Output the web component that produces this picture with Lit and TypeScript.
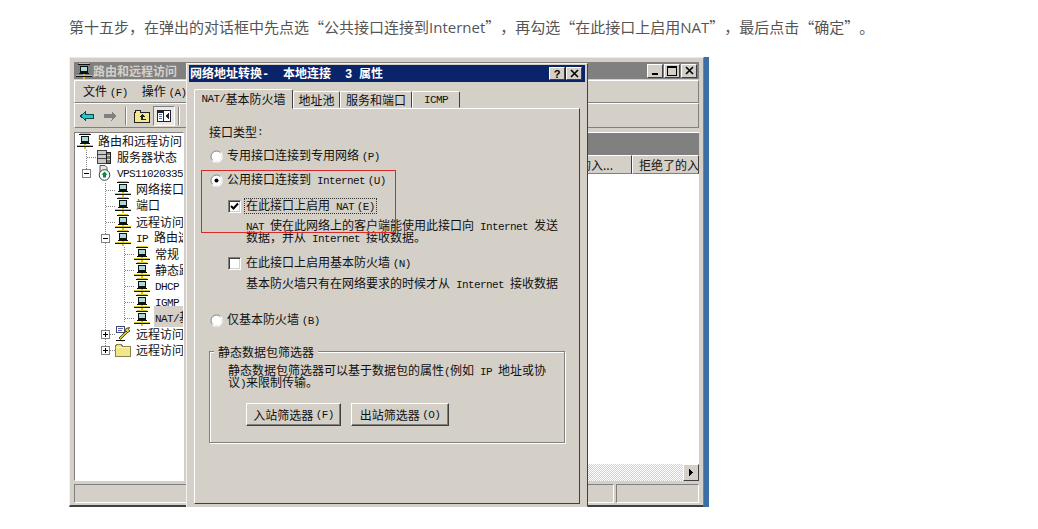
import { LitElement, html, css, svg } from "lit";
import { customElement } from "lit/decorators.js";

const netIcon = html`<svg class="ic" width="16" height="16" viewBox="0 0 16 16" shape-rendering="crispEdges">
  <rect x="3" y="0" width="10" height="1" fill="#d8c820"/>
  <rect x="2" y="1" width="12" height="1" fill="#111"/>
  <rect x="4" y="3" width="8" height="7" fill="#111"/>
  <rect x="5" y="4" width="6" height="4" fill="#a8dcdc"/>
  <rect x="3" y="10" width="10" height="1" fill="#111"/>
  <rect x="7" y="11" width="2" height="1" fill="#d8c820"/>
  <rect x="0" y="12" width="16" height="1" fill="#d8c820"/>
  <rect x="0" y="13" width="16" height="1" fill="#111"/>
  <rect x="7" y="14" width="2" height="2" fill="#d8c820"/>
</svg>`;

const serverIcon = html`<svg class="ic" width="16" height="16" viewBox="0 0 16 16" shape-rendering="crispEdges">
  <rect x="1.500" y="1.500" width="9" height="13" fill="#c8c8c8" stroke="#444"/>
  <rect x="2" y="5" width="8" height="1" fill="#444"/><rect x="2" y="9" width="8" height="1" fill="#444"/>
  <rect x="10.500" y="3.500" width="4" height="11" fill="#777" stroke="#222"/>
  <rect x="11" y="6" width="3" height="1" fill="#ddd"/><rect x="11" y="10" width="3" height="1" fill="#ddd"/>
</svg>`;

const vpsIcon = html`<svg class="ic" width="16" height="16" viewBox="0 0 16 16">
  <path d="M4 .5h5l2 2v5H4z" fill="#e4e4e4" stroke="#555"/>
  <circle cx="8.500" cy="10" r="5.300" fill="#fff" stroke="#444"/>
  <path d="M8.500 6.500l3 3.300H10v2.700H7V9.800H5.500z" fill="#0a8a3a"/>
</svg>`;

const toolsIcon = html`<svg class="ic" width="16" height="16" viewBox="0 0 16 16">
  <rect x="1.500" y=".5" width="8" height="6" fill="#fff" stroke="#446"/>
  <path d="M3 2.500h5M3 4.500h4" stroke="#5566bb"/>
  <path d="M4 12l7-7 1.500 1.500-7 7z" fill="#d8c820" stroke="#222" stroke-width=".8"/>
  <path d="M11 2.500l3.500-1-1 2 1.500 1.500-2.500 1.500-2-2z" fill="#e6da60" stroke="#222" stroke-width=".8"/>
  <path d="M1 14.500h9" stroke="#111"/><path d="M7 15v1" stroke="#d8c820"/>
</svg>`;

const folderIcon = html`<svg class="ic" width="16" height="16" viewBox="0 0 16 16" shape-rendering="crispEdges">
  <path d="M.5 14.500V3.500h1v-1h5v1h1v1h8v10z" fill="#f0e68c" stroke="#8a8050"/>
  <rect x="1" y="5" width="14" height="1" fill="#fff8c8"/>
</svg>`;

const exp = (plus: boolean) => html`<span class="exp">
  <svg width="9" height="9" viewBox="0 0 9 9" shape-rendering="crispEdges">
    <rect x=".5" y=".5" width="8" height="8" fill="#fff" stroke="#808080"/>
    <rect x="2" y="4" width="5" height="1" fill="#000"/>
    ${plus ? svg`<rect x="4" y="2" width="1" height="5" fill="#000"/>` : ""}
  </svg></span>`;

const closeX = html`<svg width="9" height="9" viewBox="0 0 9 9"><path d="M1 1l7 7M8 1L1 8" stroke="#000" stroke-width="1.600"/></svg>`;

interface Row { lv: number; icon: unknown; text: unknown; exp?: boolean }

@customElement("app-root")
export class AppRoot extends LitElement {
  static styles = css`
    :host { display: block; width: 1038px; height: 529px; background: #fff; overflow: hidden;
      font-family: "Noto Sans CJK SC", sans-serif; }
    .intro { margin: 0; padding: 17px 0 0 69px; height: 57px; box-sizing: border-box; font-size: 15px; line-height: 20px; color: #555; white-space: nowrap; text-spacing-trim: space-all; }
    .intro .en { font-family: "Open Sans", sans-serif; }
    .shot { position: relative; margin-left: 69px; width: 640px; height: 450px; background: #3a6ea5; font-size: 12px; line-height: 12px; color: #111; overflow: hidden; text-spacing-trim: space-all; }
    .m { font-family: "Liberation Mono", monospace; font-size: 11px; letter-spacing: -.6px; white-space: pre; }
    .tm { font-family: "Liberation Mono", monospace; font-size: 12px; letter-spacing: -.2px; white-space: pre; }

    .win { position: absolute; box-sizing: border-box; background: #d4d0c8; }
    .back { left: 0; top: 0; width: 635px; height: 450px; padding: 4px 4px 2px 4px; display: flex; flex-direction: column; border-top: 1px solid #ece9e2; border-left: 1px solid #f4f2ee; border-bottom: 2px solid #404040; border-right: 1px solid #808080; }
    .tbar { height: 17px; display: flex; align-items: center; padding: 0 2px; gap: 1px; flex: none; font-weight: 700; }
    .tbar.in { background: #808080; color: #d4d0c8; justify-content: space-between; }
    .tl { display: flex; align-items: center; gap: 1px; white-space: nowrap; }
    .btns { display: flex; gap: 1px; }
    .cb { width: 16px; height: 14px; box-sizing: border-box; background: #d4d0c8; border: 1px solid; border-color: #fff #404040 #404040 #fff; display: flex; align-items: center; justify-content: center; color: #000; font: 700 11px/12px "Liberation Sans", sans-serif; }
    .bar { height: 23px; flex: none; box-sizing: border-box; border: 1px solid; border-color: #fff #808080 #808080 #fff; display: flex; align-items: center; }
    .menu { padding-left: 8px; margin-top: 1px; gap: 14px; }
    .tools { height: 25px; padding-left: 5px; }
    .fwd { margin-left: 9px; }
    .sep { width: 1px; height: 18px; background: #808080; border-right: 1px solid #fff; margin: 0 7px 0 8px; }
    .sep.end { margin: 0 0 0 3px; }
    .sp { width: 3px; }
    .press { width: 22px; height: 20px; box-sizing: border-box; display: flex; align-items: center; justify-content: center; border: 1px solid; border-color: #808080 #fff #fff #808080; background: #ece9e2; }
    .main { flex: 1; display: flex; gap: 2px; margin-top: 4px; min-height: 0; }
    .tree { position: relative; width: 110px; flex: none; background: #fff; border: 1px solid; border-color: #808080 #fff #fff #808080; box-sizing: border-box; overflow: hidden; height: 349px; }
    .links { position: absolute; left: 0; top: 0; pointer-events: none; }
    .row { display: flex; align-items: center; height: 16.1px; white-space: nowrap; position: relative; }
    .row .ic { flex: none; margin-right: 5px; }
    .lv0 { padding-left: 2px; } .lv1 { padding-left: 21px; } .lv2 { padding-left: 40px; } .lv3 { padding-left: 59px; }
    .exp { position: absolute; top: 4px; width: 9px; height: 9px; line-height: 0; }
    .lv1 .exp { left: 7px; } .lv2 .exp { left: 26px; }
    .sel { background: #d4d0c8; padding: 2px 0 2px 1px; margin-left: -1px; }
    .right { flex: 1; display: flex; flex-direction: column; min-width: 0; }
    .band { height: 23px; background: #808080; flex: none; border-top: 1px solid #fff; box-sizing: border-box; }
    .head { height: 19px; flex: none; display: flex; justify-content: flex-end; background: #d4d0c8; }
    .hc { box-sizing: border-box; height: 19px; border: 1px solid; border-color: #fff #404040 #808080 #fff; display: flex; align-items: center; white-space: nowrap; overflow: hidden; }
    .hc.a { width: 55px; padding-left: 1px; }
    .hc.b { width: 67px; padding-left: 6px; }
    .list { flex: 1; background: #fff; }
    .sb { height: 17px; flex: none; display: flex; justify-content: flex-end;
      background-color: #fff; background-image: conic-gradient(#d4d0c8 25%, #fff 0 50%, #d4d0c8 0 75%, #fff 0); background-size: 2px 2px; }
    .sb .arr { width: 16px; height: 17px; box-sizing: border-box; background: #d4d0c8; border: 1px solid; border-color: #fff #404040 #404040 #fff; display: flex; align-items: center; justify-content: center; }
    .status { height: 19px; flex: none; display: flex; gap: 2px; margin-top: 3px; }
    .st { box-sizing: border-box; border: 1px solid; border-color: #808080 #fff #fff #808080; height: 19px; }
    .st.l { flex: 1; } .st.r { width: 83px; }

    .dlg { left: 117px; top: 6px; width: 402px; height: 444px; padding: 1px 2px 0 2px; display: flex; flex-direction: column; border: 1px solid; border-color: #f4f2ee #404040 #d4d0c8 #f4f2ee; }
    .dlg .tbar { background: #0a246a; color: #fff; height: 17px; justify-content: space-between; padding: 0 3px 0 1px; }
    .dlg .cb { height: 13px; }
    .tabs { display: flex; padding: 6px 0 0 5px; height: 26px; box-sizing: border-box; align-items: flex-end; flex: none; position: relative; z-index: 1; }
    .tab { height: 17px; box-sizing: border-box; border: 1px solid; border-color: #fff #404040 transparent #fff; border-radius: 2px 2px 0 0; display: flex; align-items: center; justify-content: center; white-space: nowrap; }
    .tab.on { height: 20px; width: 99px; margin-bottom: -1px; background: #d4d0c8; border-bottom: 1px solid #d4d0c8; }
    .t2 { width: 47px; } .t3 { width: 72px; } .t4 { width: 48px; }
    .panel { position: relative; box-sizing: border-box; width: 386px; height: 396px; margin-left: 5px; padding: 15px 0 0 14px; border: 1px solid; border-color: #fff #404040 #404040 #fff; }
    .ln { height: 16px; display: flex; align-items: center; white-space: nowrap; }
    .opt { margin-left: 1px; gap: 4px; }
    .g8 { margin-top: 8px; } .g10 { margin-top: 10px; } .g12 { margin-top: 12px; } .g23 { margin-top: 23px; }
    .sub { margin-left: 19px; gap: 5px; }
    .desc { margin: 6px 0 0 37px; white-space: nowrap; }
    .desc.up { margin-top: 5px; }
    .desc div { height: 12px; }
    .radio { flex: none; }
    .box { flex: none; width: 13px; height: 13px; box-sizing: border-box; background: #fff; border: 1px solid; border-color: #808080 #fff #fff #808080; box-shadow: inset 1px 1px 0 #404040, inset -1px -1px 0 #d4d0c8; display: flex; align-items: center; justify-content: center; }
    .group { position: relative; box-sizing: border-box; margin-top: 23px; width: 356px; height: 92px; border: 1px solid #808080; box-shadow: 1px 1px 0 #fff, inset 1px 1px 0 #fff; padding: 12px 0 0 18px; }
    .legend { position: absolute; left: 4px; top: -6px; background: #d4d0c8; padding: 0 4px; height: 12px; white-space: nowrap; }
    .gtext div { height: 12px; white-space: nowrap; }
    .gb { display: flex; gap: 10px; margin: 15px 0 0 18px; }
    .btn { box-sizing: border-box; height: 23px; border: 1px solid; border-color: #fff #404040 #404040 #fff; box-shadow: inset -1px -1px 0 #808080; display: flex; align-items: center; justify-content: center; white-space: pre; background: #d4d0c8; }
    .b1 { width: 95px; } .b2 { width: 98px; }
    .red { position: absolute; left: 132px; top: 113px; width: 195px; height: 63px; box-sizing: border-box; border: 1px solid #d62b2b; pointer-events: none; z-index: 3; }
    .focus { border: 1px dotted #333; padding: 0 1px; height: 14px; display: flex; align-items: center; margin-left: -2px; }
  `;

  private radio(on = false) {
    return html`<svg class="radio" width="13" height="13" viewBox="0 0 13 13">
      <circle cx="6.500" cy="6.500" r="5.500" fill="#fff" stroke="#808080" stroke-width="1"/>
      <path d="M2.500 10.500a5.600 5.600 0 0 0 8-8" fill="none" stroke="#fff" stroke-width="1.400"/>
      ${on ? svg`<circle cx="6.500" cy="6.500" r="2" fill="#000"/>` : ""}
    </svg>`;
  }

  private check(on = false) {
    return html`<span class="box">${on
      ? html`<svg width="9" height="9" viewBox="0 0 9 9"><path d="M1 4l2.500 2.500L8 1.500" fill="none" stroke="#000" stroke-width="2"/></svg>`
      : ""}</span>`;
  }

  render() {
    const m = (s: string) => html`<span class="m">${s}</span>`;
    const tm = (s: string) => html`<span class="tm">${s}</span>`;
    const rows: Row[] = [
      { lv: 0, icon: netIcon, text: "路由和远程访问" },
      { lv: 1, icon: serverIcon, text: "服务器状态" },
      { lv: 1, icon: vpsIcon, text: m("VPS110203353"), exp: false },
      { lv: 2, icon: netIcon, text: "网络接口" },
      { lv: 2, icon: netIcon, text: "端口" },
      { lv: 2, icon: netIcon, text: "远程访问" },
      { lv: 2, icon: netIcon, text: html`${m("IP ")}路由选`, exp: false },
      { lv: 3, icon: netIcon, text: "常规" },
      { lv: 3, icon: netIcon, text: "静态路" },
      { lv: 3, icon: netIcon, text: m("DHCP") },
      { lv: 3, icon: netIcon, text: m("IGMP") },
      { lv: 3, icon: netIcon, text: html`<span class="sel">${m("NAT/")}基</span>` },
      { lv: 2, icon: toolsIcon, text: "远程访问", exp: true },
      { lv: 2, icon: folderIcon, text: "远程访问", exp: true },
    ];
    return html`
      <p class="intro" lang="zh-CN">第十五步，在弹出的对话框中先点选“公共接口连接到<span class="en">Internet</span>”，再勾选“在此接口上启用<span class="en">NAT</span>”，最后点击“确定”。</p>
      <div class="shot" lang="zh-CN">
        <section class="win back">
          <div class="tbar in">
            <div class="tl">${netIcon}<span>路由和远程访问</span></div>
            <div class="btns">
              <span class="cb"><svg width="8" height="8" viewBox="0 0 8 8" shape-rendering="crispEdges"><rect x="1" y="6" width="6" height="2"/></svg></span>
              <span class="cb"><svg width="10" height="10" viewBox="0 0 10 10" shape-rendering="crispEdges"><path d="M.5 1.500h9v8h-9z" fill="none" stroke="#000"/><rect y="0" width="10" height="2"/></svg></span>
              <span class="cb">${closeX}</span>
            </div>
          </div>
          <div class="bar menu"><span>文件 ${m("(F)")}</span><span>操作 ${m("(A)")}</span></div>
          <div class="bar tools">
            <svg width="14" height="10" viewBox="0 0 14 10" shape-rendering="crispEdges"><path d="M.5 5L5.500.5V3h8v4h-8v2.500z" fill="#27c8c8" stroke="#0a4a4a"/></svg>
            <svg class="fwd" width="14" height="10" viewBox="0 0 14 10" shape-rendering="crispEdges"><path d="M13.500 5L8.500.5V3h-8v4h8v2.500z" fill="#808080"/></svg>
            <span class="sep"></span>
            <svg width="16" height="14" viewBox="0 0 16 14" shape-rendering="crispEdges"><path d="M.5 3.500h1v-2h5v2h9v10H.500z" fill="#f2e88c" stroke="#222"/><path d="M8 5L5 8h2v3h5v-1H9V8h2z" fill="#222"/></svg>
            <span class="sp"></span>
            <span class="press"><svg width="14" height="12" viewBox="0 0 14 12" shape-rendering="crispEdges"><rect x=".5" y=".5" width="13" height="11" fill="#fff" stroke="#223"/><rect x="1" y="1" width="5" height="2" fill="#223"/><rect x="2" y="4" width="3" height="1" fill="#5577aa"/><rect x="2" y="6" width="3" height="1" fill="#5577aa"/><rect x="2" y="8" width="3" height="1" fill="#5577aa"/><rect x="6" y="1" width="1" height="10" fill="#223"/><path d="M12 3v6L8 6z" fill="#223"/></svg></span>
            <span class="sep end"></span>
          </div>
          <div class="main">
            <div class="tree">
              <svg class="links" width="108" height="347" viewBox="0 0 108 347" shape-rendering="crispEdges" fill="none" stroke="#808080" stroke-dasharray="1 1">
                <path d="M11.500 17v25M11.500 24.500h10M11.500 41H7"/>
                <path d="M30.500 50v172M30.500 57.500h10M30.500 73.500h10M30.500 89.500h10M30.500 201.500h10M30.500 217.500h10"/>
                <path d="M49.500 114v76M49.500 121.500h10M49.500 137.500h10M49.500 153.500h10M49.500 169.500h10M49.500 185.500h10"/>
              </svg>
              ${rows.map(r => html`<div class="row lv${r.lv}">${r.exp !== undefined ? exp(r.exp) : ""}${r.icon}<span>${r.text}</span></div>`)}
            </div>
            <div class="right">
              <div class="band"></div>
              <div class="head"><span class="hc a">的入...</span><span class="hc b">拒绝了的入.</span></div>
              <div class="list"></div>
              <div class="sb"><span class="arr"><svg width="6" height="9" viewBox="0 0 6 9" shape-rendering="crispEdges"><path d="M1 0l4 4.500L1 9z"/></svg></span></div>
            </div>
          </div>
          <div class="status"><span class="st l"></span><span class="st r"></span></div>
        </section>

        <section class="win dlg">
          <div class="tbar">
            <span>网络地址转换${tm("-  ")}本地连接${tm("  3 ")}属性</span>
            <div class="btns">
              <span class="cb">?</span>
              <span class="cb">${closeX}</span>
            </div>
          </div>
          <div class="tabs">
            <span class="tab on">${m("NAT/")}基本防火墙</span>
            <span class="tab t2">地址池</span>
            <span class="tab t3">服务和端口</span>
            <span class="tab t4">${m("ICMP")}</span>
          </div>
          <div class="panel">
            <div class="ln">接口类型${m(":")}</div>
            <div class="ln opt g8">${this.radio()}<span>专用接口连接到专用网络 ${m("(P)")}</span></div>
            <div class="ln opt g8">${this.radio(true)}<span>公用接口连接到${m(" Internet")} ${m("(U)")}</span></div>
            <div class="ln sub g10">${this.check(true)}<span class="focus"><span>在此接口上启用${m(" NAT")} ${m("(E)")}</span></span></div>
            <div class="desc up"><div>${m("NAT ")}使在此网络上的客户端能使用此接口向${m(" Internet ")}发送</div><div>数据，并从${m(" Internet ")}接收数据。</div></div>
            <div class="ln sub g12">${this.check()}<span>在此接口上启用基本防火墙 ${m("(N)")}</span></div>
            <div class="desc"><div>基本防火墙只有在网络要求的时候才从${m(" Internet ")}接收数据</div></div>
            <div class="ln opt g23">${this.radio()}<span>仅基本防火墙 ${m("(B)")}</span></div>
            <div class="group">
              <span class="legend">静态数据包筛选器</span>
              <div class="gtext"><div>静态数据包筛选器可以基于数据包的属性${m("(")}例如${m(" IP ")}地址或协</div><div>议${m(")")}来限制传输。</div></div>
              <div class="gb"><span class="btn b1">入站筛选器 ${m("(F)")}</span><span class="btn b2">出站筛选器 ${m("(O)")}</span></div>
            </div>
          </div>
        </section>
        <div class="red"></div>
      </div>
    `;
  }
}
